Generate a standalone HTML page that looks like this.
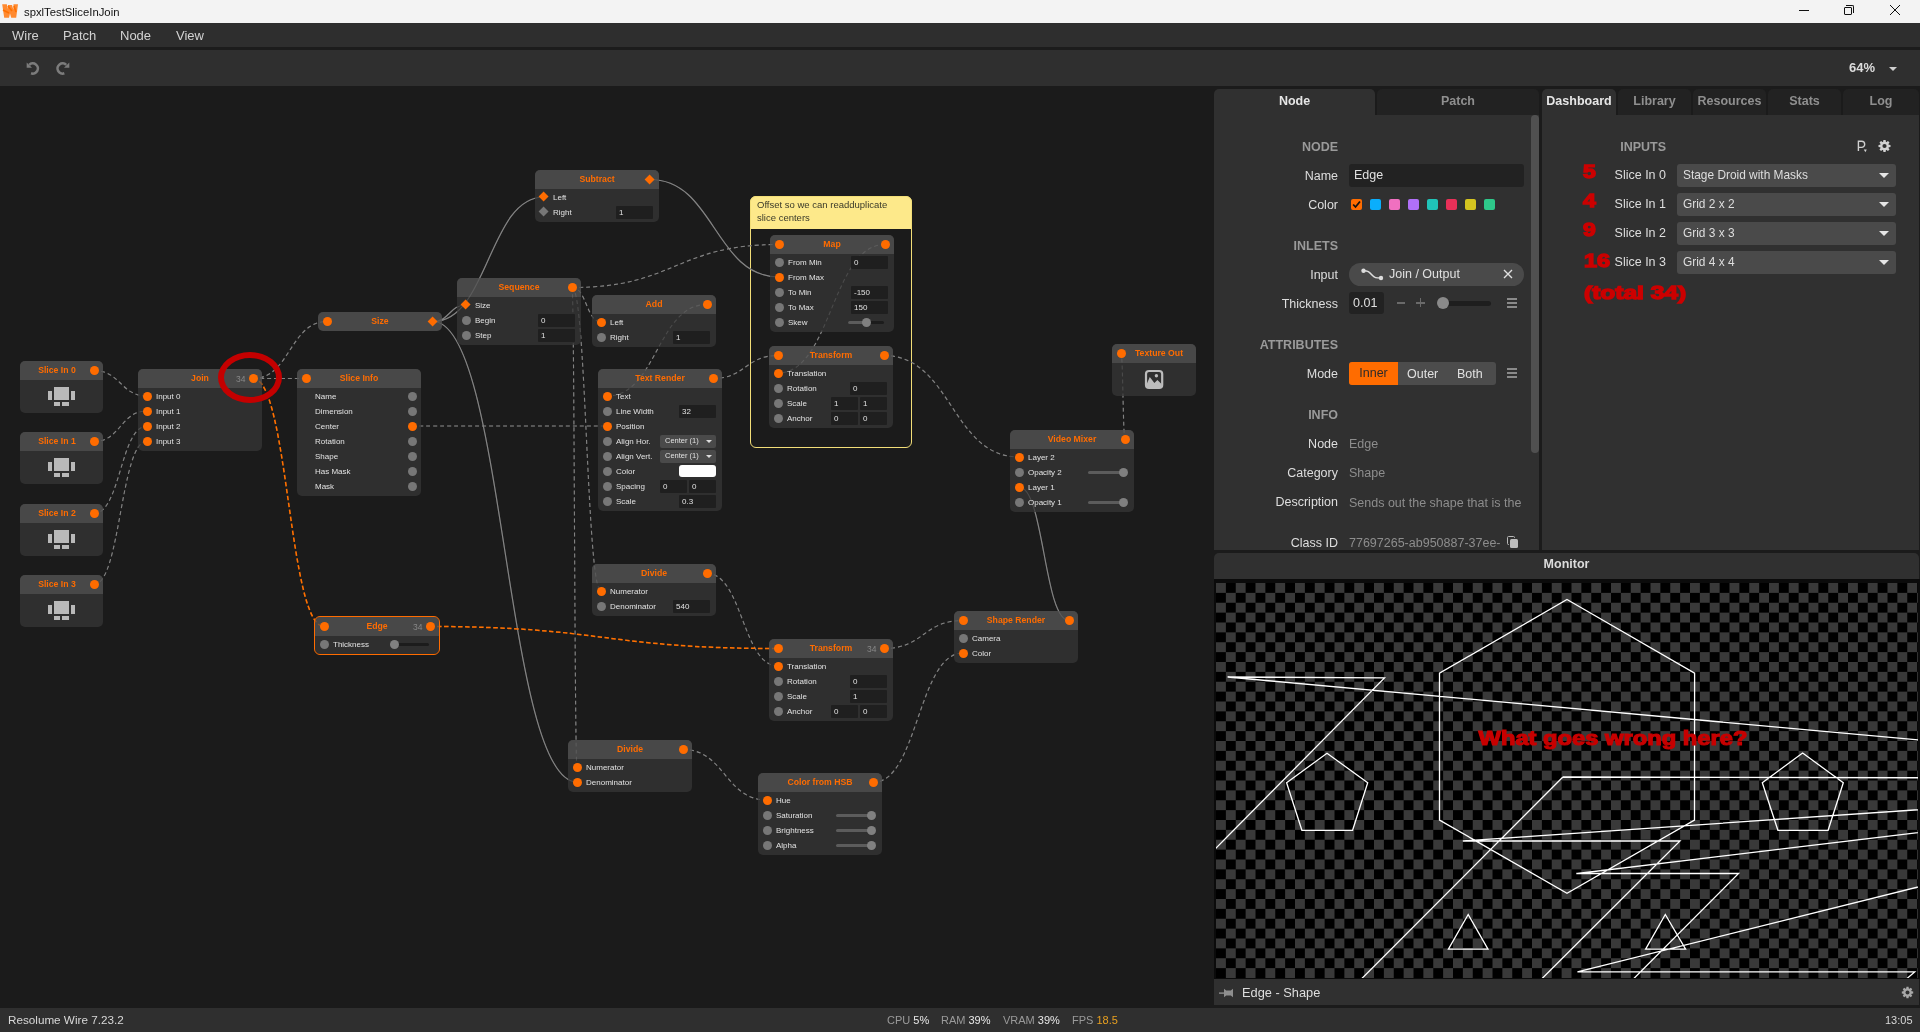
<!DOCTYPE html>
<html><head><meta charset="utf-8">
<style>
*{margin:0;padding:0;box-sizing:border-box}
html,body{width:1920px;height:1032px;overflow:hidden;background:#1b1b1b;font-family:"Liberation Sans",sans-serif;-webkit-font-smoothing:antialiased}
.a{position:absolute}
#title{left:0;top:0;width:1920px;height:23px;background:#f3f3f3}
#menu{left:0;top:23px;width:1920px;height:24px;background:#2e2e2e}
#sep{left:0;top:47px;width:1920px;height:3px;background:#1c1c1c}
#tool{left:0;top:50px;width:1920px;height:36px;background:#2f2f2f}
#canvas{left:0;top:86px;width:1214px;height:922px;background:#1b1b1b;overflow:hidden}
.mi{position:absolute;top:28px;font-size:13px;color:#d2d2d2}
.nd{position:absolute;background:#2f2f2f;border-radius:5px;overflow:hidden}
.nd .hd{height:19px;background:#484848}
.nd.ho{background:#484848}
.selb{position:absolute;border:1.5px solid #ff6c00;border-radius:6px;box-sizing:content-box}
.tt{position:absolute;width:120px;text-align:center;font-size:8.7px;font-weight:bold;color:#ff6c00;line-height:13px;white-space:nowrap}
.cnt{position:absolute;font-size:8.5px;color:#888;line-height:10px}
.pt{position:absolute;width:9px;height:9px;border-radius:50%}
.dm{position:absolute;width:7.2px;height:7.2px;transform:rotate(45deg)}
.lb{position:absolute;font-size:8px;color:#e2e2e2;line-height:12px;white-space:nowrap}
.fd{position:absolute;height:12.5px;background:#1f1f1f;border-radius:1px;font-size:8px;color:#e0e0e0;line-height:13.5px;padding-left:3px}
.dd{position:absolute;height:12.5px;background:#4a4a4a;border-radius:2px;font-size:7.5px;color:#e0e0e0;line-height:12.5px;padding-left:5px;white-space:nowrap}
i.ddar{position:absolute;width:0;height:0;border-left:3px solid transparent;border-right:3px solid transparent;border-top:3px solid #ddd}
.sw{position:absolute;height:12px;background:#fff;border-radius:3px}
i.trk{position:absolute;height:3px;border-radius:2px}
i.knob{position:absolute;width:9px;height:9px;border-radius:50%;background:#808080}
i.ic{position:absolute;background:#b9b9b9}
svg.wires{position:absolute;left:0;top:86px}
svg.wires.up{opacity:0.33}
.wd{fill:none;stroke:#828282;stroke-width:1.1;stroke-dasharray:4 3}
.ws{fill:none;stroke:#848484;stroke-width:1.15}
.wo{fill:none;stroke:#ff7000;stroke-width:1.5;stroke-dasharray:4.5 2.5}
#comment{left:750px;top:196px;width:162px;height:252px;border:1.6px solid #f2de78;border-radius:6px}
#commenthd{left:750px;top:196px;width:162px;height:33px;background:#fde98a;border-radius:6px 6px 0 0}
.ctext{position:absolute;left:757px;font-size:9.5px;color:#3a3a2a;line-height:12px;white-space:nowrap}
#redell{left:218px;top:352px;width:64px;height:51px;border:6px solid #c40000;border-radius:50%}
/* right panels */
.tab{position:absolute;top:89px;height:26px;background:#222;border-radius:5px 5px 0 0;text-align:center;font-size:12.5px;font-weight:bold;color:#8f8f8f;line-height:24px}
.tab.on{background:#303030;color:#e6e6e6}
.pbody{position:absolute;background:#303030}
.sh{position:absolute;font-size:12.5px;font-weight:bold;color:#9a9a9a;text-align:right;width:200px;line-height:16px}
.pl{position:absolute;font-size:12.5px;color:#dedede;text-align:right;width:200px;line-height:16px;white-space:nowrap}
.pv{position:absolute;font-size:12.5px;color:#8d8d8d;line-height:16px;white-space:nowrap}
.sq{position:absolute;top:199px;width:11px;height:11px;border-radius:2px}
.ddr{position:absolute;left:1677px;width:219px;height:23px;background:#4a4a4a;border-radius:3px;font-size:11.9px;color:#dedede;line-height:22px;padding-left:6px}
.ddr i{position:absolute;left:202px;top:9px;border-left:5px solid transparent;border-right:5px solid transparent;border-top:5px solid #e6e6e6}
.rn{position:absolute;font-size:19px;font-weight:bold;color:#cc0000;-webkit-text-stroke:1.4px #cc0000;line-height:20px;white-space:nowrap;transform-origin:0 0;transform:scaleX(1.21)}
svg.mon{position:absolute;left:1216px;top:582.5px}
.wgw{font-size:19.5px;font-weight:bold;fill:#c80000;stroke:#c80000;stroke-width:1.1px;font-family:"Liberation Sans",sans-serif}
.st{position:absolute;top:1013px;font-size:11px;line-height:14px;color:#9a9a9a;white-space:nowrap}
.st b{font-weight:normal;color:#e8e8e8}
#wrap{position:absolute;left:0;top:0;width:1920px;height:1032px;will-change:transform}
</style></head><body><div id="wrap">
<div id="title" class="a">
  <svg class="a" style="left:0;top:0" width="20" height="20" viewBox="0 0 20 20"><path d="M2.2 4.2 L6.8 4.2 L8 9 L8 5 L12 5 L13.3 9.5 L13.5 4.2 L18 4.2 L16.2 17.8 L11.2 17.8 L10 13.5 L9 17.8 L4.2 17.8Z" fill="#ff8a30"/><path d="M3 10 L9 13 M8 6 L12 11 M14 6 L16 12" stroke="#ff7000" stroke-width="1.6"/></svg>
  <div class="a" style="left:24px;top:4px;font-size:11.3px;color:#111;line-height:16px">spxlTestSliceInJoin</div>
  <div class="a" style="left:1799px;top:10px;width:10px;height:1px;background:#111"></div>
  <div class="a" style="left:1844px;top:7px;width:8px;height:8px;border:1px solid #111;border-radius:1px"></div>
  <div class="a" style="left:1846px;top:5px;width:8px;height:8px;border-top:1px solid #111;border-right:1px solid #111;border-radius:0 2px 0 0"></div>
  <svg class="a" style="left:1889px;top:4px" width="12" height="12" viewBox="0 0 12 12"><path d="M1 1L11 11M11 1L1 11" stroke="#111" stroke-width="1"/></svg>
</div>
<div id="menu" class="a"></div>
<div class="mi" style="left:12px">Wire</div>
<div class="mi" style="left:63px">Patch</div>
<div class="mi" style="left:120px">Node</div>
<div class="mi" style="left:176px">View</div>
<div id="sep" class="a"></div>
<div id="tool" class="a">
  <svg class="a" style="left:20px;top:6px" width="56" height="24" viewBox="20 56 56 24"><path d="M26.7 62.4 L26.7 67.7 L32 67.7Z" fill="#7c7c7c"/><path d="M29.2 64.9 A5.1 5.1 0 1 1 31.06 73.3" fill="none" stroke="#7c7c7c" stroke-width="2.6"/><path d="M69.3 62.4 L69.3 67.7 L64 67.7Z" fill="#7c7c7c"/><path d="M66.2 64.9 A5.1 5.1 0 1 0 64.34 73.3" fill="none" stroke="#7c7c7c" stroke-width="2.6"/></svg>
  <div class="a" style="left:1849px;top:10px;font-size:13px;font-weight:bold;color:#dcdcdc;line-height:16px">64%</div>
  <div class="a" style="left:1889px;top:17px;border-left:4px solid transparent;border-right:4px solid transparent;border-top:4px solid #cfcfcf"></div>
</div>
<div id="canvas" class="a"></div>
<div id="commenthd" class="a"></div>
<div id="comment" class="a"></div>
<div class="ctext" style="top:199px">Offset so we can readduplicate</div>
<div class="ctext" style="top:212px">slice centers</div>
<svg class="wires" width="1214" height="922" viewBox="0 86 1214 922"><path class="wd" d="M94 370.5C120.5 370.5 120.5 396 147 396M94 441.5C120.5 441.5 120.5 411 147 411M94 513.5C120.5 513.5 120.5 426 147 426M94 584.5C120.5 584.5 120.5 441 147 441M253 378.5C279.5 378.5 279.5 378.5 306 378.5M253 378.5C290.0 378.5 290.0 321.5 327 321.5M572 287.5C675.5 287.5 675.5 244.5 779 244.5M572 287.5C586.5 287.5 586.5 322 601 322M572 287.5C586.5 287.5 586.5 591 601 591M572 287.5C574.5 287.5 574.5 767 577 767M412 426C509.5 426 509.5 426 607 426M707 304.5C657.0 304.5 657.0 396 607 396M713 378.5C745.5 378.5 745.5 355.5 778 355.5M885 244.5C831.5 244.5 831.5 373 778 373M884 355.5C951.5 355.5 951.5 457 1019 457M1125 439.5C1123.0 439.5 1123.0 353.5 1121 353.5M707 573.5C742.5 573.5 742.5 666 778 666M884 648.5C923.5 648.5 923.5 620.5 963 620.5M683 749.5C725.0 749.5 725.0 800 767 800M873 782.5C918.0 782.5 918.0 653 963 653"/><path class="ws" d="M433 321.5C449.5 321.5 449.5 305 466 305M433 321.5C488.5 321.5 488.5 197 544 197M433 321.5C505.0 321.5 505.0 782 577 782M650 179.5C714.5 179.5 714.5 277 779 277M1069 620.5C1044.0 620.5 1044.0 487 1019 487"/><path class="wo" d="M253 378.5C288.5 378.5 288.5 626.5 324 626.5M430 626.5C604.0 626.5 604.0 648.5 778 648.5"/></svg>
<div class="nd" style="left:20px;top:361px;width:83px;height:52px"><div class="hd"></div></div><div class="nd" style="left:20px;top:432px;width:83px;height:52px"><div class="hd"></div></div><div class="nd" style="left:20px;top:504px;width:83px;height:52px"><div class="hd"></div></div><div class="nd" style="left:20px;top:575px;width:83px;height:52px"><div class="hd"></div></div><div class="nd" style="left:138px;top:369px;width:124px;height:82px"><div class="hd"></div></div><div class="nd ho" style="left:318px;top:312px;width:124px;height:19px"><div class="hd"></div></div><div class="nd" style="left:297px;top:369px;width:124px;height:127px"><div class="hd"></div></div><div class="nd" style="left:535px;top:170px;width:124px;height:52px"><div class="hd"></div></div><div class="nd" style="left:457px;top:278px;width:124px;height:67px"><div class="hd"></div></div><div class="nd" style="left:592px;top:295px;width:124px;height:52px"><div class="hd"></div></div><div class="nd" style="left:598px;top:369px;width:124px;height:142px"><div class="hd"></div></div><div class="nd" style="left:770px;top:235px;width:124px;height:97px"><div class="hd"></div></div><div class="nd" style="left:769px;top:346px;width:124px;height:82px"><div class="hd"></div></div><div class="nd" style="left:1112px;top:344px;width:84px;height:52px"><div class="hd"></div></div><div class="nd" style="left:1010px;top:430px;width:124px;height:82px"><div class="hd"></div></div><div class="nd" style="left:592px;top:564px;width:124px;height:52px"><div class="hd"></div></div><div class="nd" style="left:315px;top:617px;width:124px;height:37px"><div class="hd"></div></div><div class="selb" style="left:313.5px;top:615.5px;width:124px;height:37px"></div><div class="nd" style="left:769px;top:639px;width:124px;height:82px"><div class="hd"></div></div><div class="nd" style="left:954px;top:611px;width:124px;height:52px"><div class="hd"></div></div><div class="nd" style="left:568px;top:740px;width:124px;height:52px"><div class="hd"></div></div><div class="nd" style="left:758px;top:773px;width:124px;height:82px"><div class="hd"></div></div>
<svg class="wires up" width="1214" height="922" viewBox="0 86 1214 922"><path class="wd" d="M94 370.5C120.5 370.5 120.5 396 147 396M94 441.5C120.5 441.5 120.5 411 147 411M94 513.5C120.5 513.5 120.5 426 147 426M94 584.5C120.5 584.5 120.5 441 147 441M253 378.5C279.5 378.5 279.5 378.5 306 378.5M253 378.5C290.0 378.5 290.0 321.5 327 321.5M572 287.5C675.5 287.5 675.5 244.5 779 244.5M572 287.5C586.5 287.5 586.5 322 601 322M572 287.5C586.5 287.5 586.5 591 601 591M572 287.5C574.5 287.5 574.5 767 577 767M412 426C509.5 426 509.5 426 607 426M707 304.5C657.0 304.5 657.0 396 607 396M713 378.5C745.5 378.5 745.5 355.5 778 355.5M885 244.5C831.5 244.5 831.5 373 778 373M884 355.5C951.5 355.5 951.5 457 1019 457M1125 439.5C1123.0 439.5 1123.0 353.5 1121 353.5M707 573.5C742.5 573.5 742.5 666 778 666M884 648.5C923.5 648.5 923.5 620.5 963 620.5M683 749.5C725.0 749.5 725.0 800 767 800M873 782.5C918.0 782.5 918.0 653 963 653"/><path class="ws" d="M433 321.5C449.5 321.5 449.5 305 466 305M433 321.5C488.5 321.5 488.5 197 544 197M433 321.5C505.0 321.5 505.0 782 577 782M650 179.5C714.5 179.5 714.5 277 779 277M1069 620.5C1044.0 620.5 1044.0 487 1019 487"/><path class="wo" d="M253 378.5C288.5 378.5 288.5 626.5 324 626.5M430 626.5C604.0 626.5 604.0 648.5 778 648.5"/></svg>
<div class="tt" style="left:-3px;top:364px">Slice In 0</div><i class="pt" style="left:89.5px;top:366.0px;background:#ff6c00"></i><i class="ic" style="left:54px;top:387px;width:15px;height:13px"></i><i class="ic" style="left:48px;top:391px;width:4px;height:9px"></i><i class="ic" style="left:71px;top:391px;width:4px;height:9px"></i><i class="ic" style="left:54px;top:402px;width:6px;height:4px"></i><i class="ic" style="left:62px;top:402px;width:7px;height:4px"></i><div class="tt" style="left:-3px;top:435px">Slice In 1</div><i class="pt" style="left:89.5px;top:437.0px;background:#ff6c00"></i><i class="ic" style="left:54px;top:458px;width:15px;height:13px"></i><i class="ic" style="left:48px;top:462px;width:4px;height:9px"></i><i class="ic" style="left:71px;top:462px;width:4px;height:9px"></i><i class="ic" style="left:54px;top:473px;width:6px;height:4px"></i><i class="ic" style="left:62px;top:473px;width:7px;height:4px"></i><div class="tt" style="left:-3px;top:507px">Slice In 2</div><i class="pt" style="left:89.5px;top:509.0px;background:#ff6c00"></i><i class="ic" style="left:54px;top:530px;width:15px;height:13px"></i><i class="ic" style="left:48px;top:534px;width:4px;height:9px"></i><i class="ic" style="left:71px;top:534px;width:4px;height:9px"></i><i class="ic" style="left:54px;top:545px;width:6px;height:4px"></i><i class="ic" style="left:62px;top:545px;width:7px;height:4px"></i><div class="tt" style="left:-3px;top:578px">Slice In 3</div><i class="pt" style="left:89.5px;top:580.0px;background:#ff6c00"></i><i class="ic" style="left:54px;top:601px;width:15px;height:13px"></i><i class="ic" style="left:48px;top:605px;width:4px;height:9px"></i><i class="ic" style="left:71px;top:605px;width:4px;height:9px"></i><i class="ic" style="left:54px;top:616px;width:6px;height:4px"></i><i class="ic" style="left:62px;top:616px;width:7px;height:4px"></i><div class="tt" style="left:140.0px;top:372px">Join</div><div class="cnt" style="left:236px;top:373.5px">34</div><i class="pt" style="left:248.5px;top:374.0px;background:#ff6c00"></i><i class="pt" style="left:142.5px;top:391.5px;background:#ff6c00"></i><div class="lb" style="left:156px;top:390.5px">Input 0</div><i class="pt" style="left:142.5px;top:406.5px;background:#ff6c00"></i><div class="lb" style="left:156px;top:405.5px">Input 1</div><i class="pt" style="left:142.5px;top:421.5px;background:#ff6c00"></i><div class="lb" style="left:156px;top:420.5px">Input 2</div><i class="pt" style="left:142.5px;top:436.5px;background:#ff6c00"></i><div class="lb" style="left:156px;top:435.5px">Input 3</div><div class="tt" style="left:320.0px;top:315px">Size</div><i class="pt" style="left:322.5px;top:317.0px;background:#ff6c00"></i><i class="dm" style="left:429.4px;top:317.9px;background:#ff6c00"></i><div class="tt" style="left:299.0px;top:372px">Slice Info</div><i class="pt" style="left:301.5px;top:374.0px;background:#ff6c00"></i><i class="pt" style="left:407.5px;top:391.5px;background:#777777"></i><div class="lb" style="left:315px;top:390.5px">Name</div><i class="pt" style="left:407.5px;top:406.5px;background:#777777"></i><div class="lb" style="left:315px;top:405.5px">Dimension</div><i class="pt" style="left:407.5px;top:421.5px;background:#ff6c00"></i><div class="lb" style="left:315px;top:420.5px">Center</div><i class="pt" style="left:407.5px;top:436.5px;background:#777777"></i><div class="lb" style="left:315px;top:435.5px">Rotation</div><i class="pt" style="left:407.5px;top:451.5px;background:#777777"></i><div class="lb" style="left:315px;top:450.5px">Shape</div><i class="pt" style="left:407.5px;top:466.5px;background:#777777"></i><div class="lb" style="left:315px;top:465.5px">Has Mask</div><i class="pt" style="left:407.5px;top:481.5px;background:#777777"></i><div class="lb" style="left:315px;top:480.5px">Mask</div><div class="tt" style="left:537.0px;top:173px">Subtract</div><i class="dm" style="left:646.4px;top:175.9px;background:#ff6c00"></i><i class="dm" style="left:540.4px;top:193.4px;background:#ff6c00"></i><div class="lb" style="left:553px;top:191.5px">Left</div><i class="dm" style="left:540.4px;top:208.4px;background:#777777"></i><div class="lb" style="left:553px;top:206.5px">Right</div><div class="fd" style="left:616px;top:206px;width:37px">1</div><div class="tt" style="left:459.0px;top:281px">Sequence</div><i class="pt" style="left:567.5px;top:283.0px;background:#ff6c00"></i><i class="dm" style="left:462.4px;top:301.4px;background:#ff6c00"></i><div class="lb" style="left:475px;top:299.5px">Size</div><i class="pt" style="left:461.5px;top:315.5px;background:#777777"></i><div class="lb" style="left:475px;top:314.5px">Begin</div><div class="fd" style="left:538px;top:314px;width:37px">0</div><i class="pt" style="left:461.5px;top:330.5px;background:#777777"></i><div class="lb" style="left:475px;top:329.5px">Step</div><div class="fd" style="left:538px;top:329px;width:37px">1</div><div class="tt" style="left:594.0px;top:298px">Add</div><i class="pt" style="left:702.5px;top:300.0px;background:#ff6c00"></i><i class="pt" style="left:596.5px;top:317.5px;background:#ff6c00"></i><div class="lb" style="left:610px;top:316.5px">Left</div><i class="pt" style="left:596.5px;top:332.5px;background:#777777"></i><div class="lb" style="left:610px;top:331.5px">Right</div><div class="fd" style="left:673px;top:331px;width:37px">1</div><div class="tt" style="left:600.0px;top:372px">Text Render</div><i class="pt" style="left:708.5px;top:374.0px;background:#ff6c00"></i><i class="pt" style="left:602.5px;top:391.5px;background:#ff6c00"></i><div class="lb" style="left:616px;top:390.5px">Text</div><i class="pt" style="left:602.5px;top:406.5px;background:#777777"></i><div class="lb" style="left:616px;top:405.5px">Line Width</div><div class="fd" style="left:679px;top:405px;width:37px">32</div><i class="pt" style="left:602.5px;top:421.5px;background:#ff6c00"></i><div class="lb" style="left:616px;top:420.5px">Position</div><i class="pt" style="left:602.5px;top:436.5px;background:#777777"></i><div class="lb" style="left:616px;top:435.5px">Align Hor.</div><div class="dd" style="left:660px;top:435px;width:56px">Center (1)</div><i class="ddar" style="left:706px;top:440px"></i><i class="pt" style="left:602.5px;top:451.5px;background:#777777"></i><div class="lb" style="left:616px;top:450.5px">Align Vert.</div><div class="dd" style="left:660px;top:450px;width:56px">Center (1)</div><i class="ddar" style="left:706px;top:455px"></i><i class="pt" style="left:602.5px;top:466.5px;background:#777777"></i><div class="lb" style="left:616px;top:465.5px">Color</div><div class="sw" style="left:679px;top:465px;width:37px"></div><i class="pt" style="left:602.5px;top:481.5px;background:#777777"></i><div class="lb" style="left:616px;top:480.5px">Spacing</div><div class="fd" style="left:660px;top:480px;width:27px">0</div><div class="fd" style="left:689px;top:480px;width:27px">0</div><i class="pt" style="left:602.5px;top:496.5px;background:#777777"></i><div class="lb" style="left:616px;top:495.5px">Scale</div><div class="fd" style="left:679px;top:495px;width:37px">0.3</div><div class="tt" style="left:772.0px;top:238px">Map</div><i class="pt" style="left:774.5px;top:240.0px;background:#ff6c00"></i><i class="pt" style="left:880.5px;top:240.0px;background:#ff6c00"></i><i class="pt" style="left:774.5px;top:257.5px;background:#777777"></i><div class="lb" style="left:788px;top:256.5px">From Min</div><div class="fd" style="left:851px;top:256px;width:37px">0</div><i class="pt" style="left:774.5px;top:272.5px;background:#ff6c00"></i><div class="lb" style="left:788px;top:271.5px">From Max</div><i class="pt" style="left:774.5px;top:287.5px;background:#777777"></i><div class="lb" style="left:788px;top:286.5px">To Min</div><div class="fd" style="left:851px;top:286px;width:37px">-150</div><i class="pt" style="left:774.5px;top:302.5px;background:#777777"></i><div class="lb" style="left:788px;top:301.5px">To Max</div><div class="fd" style="left:851px;top:301px;width:37px">150</div><i class="pt" style="left:774.5px;top:317.5px;background:#777777"></i><div class="lb" style="left:788px;top:316.5px">Skew</div><i class="trk" style="left:848px;top:320.5px;width:36px;background:#1c1c1c"></i><i class="trk" style="left:848px;top:320.5px;width:18px;background:#5c5c5c"></i><i class="knob" style="left:861.5px;top:317.5px"></i><div class="tt" style="left:771.0px;top:349px">Transform</div><i class="pt" style="left:773.5px;top:351.0px;background:#ff6c00"></i><i class="pt" style="left:879.5px;top:351.0px;background:#ff6c00"></i><i class="pt" style="left:773.5px;top:368.5px;background:#ff6c00"></i><div class="lb" style="left:787px;top:367.5px">Translation</div><i class="pt" style="left:773.5px;top:383.5px;background:#777777"></i><div class="lb" style="left:787px;top:382.5px">Rotation</div><div class="fd" style="left:850px;top:382px;width:37px">0</div><i class="pt" style="left:773.5px;top:398.5px;background:#777777"></i><div class="lb" style="left:787px;top:397.5px">Scale</div><div class="fd" style="left:831px;top:397px;width:27px">1</div><div class="fd" style="left:860px;top:397px;width:27px">1</div><i class="pt" style="left:773.5px;top:413.5px;background:#777777"></i><div class="lb" style="left:787px;top:412.5px">Anchor</div><div class="fd" style="left:831px;top:412px;width:27px">0</div><div class="fd" style="left:860px;top:412px;width:27px">0</div><div class="tt" style="left:1099px;top:347px">Texture Out</div><i class="pt" style="left:1116.5px;top:349.0px;background:#ff6c00"></i><div class="tt" style="left:1012.0px;top:433px">Video Mixer</div><i class="pt" style="left:1120.5px;top:435.0px;background:#ff6c00"></i><i class="pt" style="left:1014.5px;top:452.5px;background:#ff6c00"></i><div class="lb" style="left:1028px;top:451.5px">Layer 2</div><i class="pt" style="left:1014.5px;top:467.5px;background:#777777"></i><div class="lb" style="left:1028px;top:466.5px">Opacity 2</div><i class="trk" style="left:1088px;top:470.5px;width:38px;background:#5c5c5c"></i><i class="knob" style="left:1118.5px;top:467.5px"></i><i class="pt" style="left:1014.5px;top:482.5px;background:#ff6c00"></i><div class="lb" style="left:1028px;top:481.5px">Layer 1</div><i class="pt" style="left:1014.5px;top:497.5px;background:#777777"></i><div class="lb" style="left:1028px;top:496.5px">Opacity 1</div><i class="trk" style="left:1088px;top:500.5px;width:38px;background:#5c5c5c"></i><i class="knob" style="left:1118.5px;top:497.5px"></i><div class="tt" style="left:594.0px;top:567px">Divide</div><i class="pt" style="left:702.5px;top:569.0px;background:#ff6c00"></i><i class="pt" style="left:596.5px;top:586.5px;background:#ff6c00"></i><div class="lb" style="left:610px;top:585.5px">Numerator</div><i class="pt" style="left:596.5px;top:601.5px;background:#777777"></i><div class="lb" style="left:610px;top:600.5px">Denominator</div><div class="fd" style="left:673px;top:600px;width:37px">540</div><div class="tt" style="left:317.0px;top:620px">Edge</div><div class="cnt" style="left:413px;top:621.5px">34</div><i class="pt" style="left:319.5px;top:622.0px;background:#ff6c00"></i><i class="pt" style="left:425.5px;top:622.0px;background:#ff6c00"></i><i class="pt" style="left:319.5px;top:639.5px;background:#777777"></i><div class="lb" style="left:333px;top:638.5px">Thickness</div><i class="trk" style="left:394px;top:642.5px;width:35px;background:#1c1c1c"></i><i class="trk" style="left:394px;top:642.5px;width:0px;background:#5c5c5c"></i><i class="knob" style="left:389.5px;top:639.5px"></i><div class="tt" style="left:771.0px;top:642px">Transform</div><div class="cnt" style="left:867px;top:643.5px">34</div><i class="pt" style="left:773.5px;top:644.0px;background:#ff6c00"></i><i class="pt" style="left:879.5px;top:644.0px;background:#ff6c00"></i><i class="pt" style="left:773.5px;top:661.5px;background:#ff6c00"></i><div class="lb" style="left:787px;top:660.5px">Translation</div><i class="pt" style="left:773.5px;top:676.5px;background:#777777"></i><div class="lb" style="left:787px;top:675.5px">Rotation</div><div class="fd" style="left:850px;top:675px;width:37px">0</div><i class="pt" style="left:773.5px;top:691.5px;background:#777777"></i><div class="lb" style="left:787px;top:690.5px">Scale</div><div class="fd" style="left:850px;top:690px;width:37px">1</div><i class="pt" style="left:773.5px;top:706.5px;background:#777777"></i><div class="lb" style="left:787px;top:705.5px">Anchor</div><div class="fd" style="left:831px;top:705px;width:27px">0</div><div class="fd" style="left:860px;top:705px;width:27px">0</div><div class="tt" style="left:956.0px;top:614px">Shape Render</div><i class="pt" style="left:958.5px;top:616.0px;background:#ff6c00"></i><i class="pt" style="left:1064.5px;top:616.0px;background:#ff6c00"></i><i class="pt" style="left:958.5px;top:633.5px;background:#777777"></i><div class="lb" style="left:972px;top:632.5px">Camera</div><i class="pt" style="left:958.5px;top:648.5px;background:#ff6c00"></i><div class="lb" style="left:972px;top:647.5px">Color</div><div class="tt" style="left:570.0px;top:743px">Divide</div><i class="pt" style="left:678.5px;top:745.0px;background:#ff6c00"></i><i class="pt" style="left:572.5px;top:762.5px;background:#ff6c00"></i><div class="lb" style="left:586px;top:761.5px">Numerator</div><i class="pt" style="left:572.5px;top:777.5px;background:#ff6c00"></i><div class="lb" style="left:586px;top:776.5px">Denominator</div><div class="tt" style="left:760.0px;top:776px">Color from HSB</div><i class="pt" style="left:868.5px;top:778.0px;background:#ff6c00"></i><i class="pt" style="left:762.5px;top:795.5px;background:#ff6c00"></i><div class="lb" style="left:776px;top:794.5px">Hue</div><i class="pt" style="left:762.5px;top:810.5px;background:#777777"></i><div class="lb" style="left:776px;top:809.5px">Saturation</div><i class="trk" style="left:836px;top:813.5px;width:38px;background:#5c5c5c"></i><i class="knob" style="left:866.5px;top:810.5px"></i><i class="pt" style="left:762.5px;top:825.5px;background:#777777"></i><div class="lb" style="left:776px;top:824.5px">Brightness</div><i class="trk" style="left:836px;top:828.5px;width:38px;background:#5c5c5c"></i><i class="knob" style="left:866.5px;top:825.5px"></i><i class="pt" style="left:762.5px;top:840.5px;background:#777777"></i><div class="lb" style="left:776px;top:839.5px">Alpha</div><i class="trk" style="left:836px;top:843.5px;width:38px;background:#5c5c5c"></i><i class="knob" style="left:866.5px;top:840.5px"></i>
<svg class="a" style="left:1144px;top:369px" width="21" height="21" viewBox="1144 369 21 21"><rect x="1146" y="371" width="16.2" height="17" rx="3" fill="none" stroke="#bcbcbc" stroke-width="2.2"/><path d="M1146.5 384.5 L1149.8 377 L1154.4 383.1 L1157.4 380 L1161.5 384 L1161.5 387.5 L1146.5 387.5Z" fill="#bcbcbc"/><circle cx="1156.4" cy="375.8" r="1.7" fill="#bcbcbc"/></svg>
<div id="redell" class="a"></div>

<!-- Node panel -->
<div class="tab on" style="left:1214px;width:161px">Node</div>
<div class="tab" style="left:1377px;width:162px">Patch</div>
<div class="pbody" style="left:1214px;top:115px;width:325px;height:435px"></div>
<div class="a" style="left:1531px;top:115px;width:8px;height:338px;background:#505050;border-radius:4px"></div>
<div class="sh" style="left:1138px;top:139px">NODE</div>
<div class="pl" style="left:1138px;top:168px">Name</div>
<div class="a" style="left:1349px;top:164px;width:175px;height:23px;background:#222;border-radius:3px;font-size:12.5px;color:#e0e0e0;line-height:22px;padding-left:5px">Edge</div>
<div class="pl" style="left:1138px;top:197px">Color</div>
<div class="sq" style="left:1351px;background:#ff6c00"></div>
<svg class="a" style="left:1351px;top:199px" width="11" height="11" viewBox="0 0 11 11"><path d="M2.2 5.5 L4.5 8 L9 2.5" fill="none" stroke="#111" stroke-width="1.8"/></svg>
<div class="sq" style="left:1370px;background:#0aaefc"></div>
<div class="sq" style="left:1389px;background:#f070c0"></div>
<div class="sq" style="left:1408px;background:#b070f8"></div>
<div class="sq" style="left:1427px;background:#20c4b8"></div>
<div class="sq" style="left:1446px;background:#e83058"></div>
<div class="sq" style="left:1465px;background:#d4c420"></div>
<div class="sq" style="left:1484px;background:#2ec88a"></div>
<div class="sh" style="left:1138px;top:238px">INLETS</div>
<div class="pl" style="left:1138px;top:267px">Input</div>
<div class="a" style="left:1349px;top:263px;width:175px;height:23px;background:#4a4a4a;border-radius:12px"></div>
<svg class="a" style="left:1359px;top:266px" width="26" height="17" viewBox="0 0 26 17"><path d="M4.5 4.7 C9 4.7 10 5.5 13 9 C15.5 12 17 12 22 12" fill="none" stroke="#ddd" stroke-width="1.5"/><circle cx="4.5" cy="4.7" r="2.2" fill="#ddd"/><circle cx="22" cy="12" r="2.2" fill="#ddd"/></svg>
<div class="pv" style="left:1389px;top:266px;color:#e0e0e0">Join / Output</div>
<svg class="a" style="left:1503px;top:269px" width="10" height="10" viewBox="0 0 10 10"><path d="M1 1L9 9M9 1L1 9" stroke="#e0e0e0" stroke-width="1.4"/></svg>
<div class="pl" style="left:1138px;top:296px">Thickness</div>
<div class="a" style="left:1349px;top:292px;width:35px;height:22px;background:#222;border-radius:3px;font-size:12.5px;color:#e0e0e0;line-height:22px;padding-left:4px">0.01</div>
<div class="a" style="left:1397px;top:302px;width:8px;height:1.5px;background:#6a6a6a"></div>
<div class="a" style="left:1416px;top:302px;width:9px;height:1.5px;background:#6a6a6a"></div>
<div class="a" style="left:1419.8px;top:298px;width:1.5px;height:9px;background:#6a6a6a"></div>
<div class="a" style="left:1440px;top:301px;width:51px;height:5px;background:#1e1e1e;border-radius:3px"></div>
<div class="a" style="left:1437px;top:297px;width:12px;height:12px;background:#8a8a8a;border-radius:50%"></div>
<div class="a" style="left:1507px;top:298px;width:10px;height:2px;background:#8a8a8a;box-shadow:0 4px 0 #8a8a8a,0 8px 0 #8a8a8a"></div>
<div class="sh" style="left:1138px;top:337px">ATTRIBUTES</div>
<div class="pl" style="left:1138px;top:366px">Mode</div>
<div class="a" style="left:1349px;top:362px;width:147px;height:23px;background:#4c4c4c;border-radius:3px"></div>
<div class="a" style="left:1349px;top:362px;width:49px;height:23px;background:#ff6c00;border-radius:3px 0 0 3px;font-size:12.5px;color:#2a2a2a;line-height:22px;text-align:center">Inner</div>
<div class="pv" style="left:1407px;top:366px;color:#e0e0e0">Outer</div>
<div class="pv" style="left:1457px;top:366px;color:#e0e0e0">Both</div>
<div class="a" style="left:1507px;top:368px;width:10px;height:2px;background:#8a8a8a;box-shadow:0 4px 0 #8a8a8a,0 8px 0 #8a8a8a"></div>
<div class="sh" style="left:1138px;top:407px">INFO</div>
<div class="pl" style="left:1138px;top:436px">Node</div>
<div class="pv" style="left:1349px;top:436px">Edge</div>
<div class="pl" style="left:1138px;top:465px">Category</div>
<div class="pv" style="left:1349px;top:465px">Shape</div>
<div class="pl" style="left:1138px;top:494px">Description</div>
<div class="pv" style="left:1349px;top:495px">Sends out the shape that is the</div>
<div class="pl" style="left:1138px;top:535px">Class ID</div>
<div class="pv" style="left:1349px;top:535px">77697265-ab950887-37ee-</div>
<div class="a" style="left:1507px;top:535.5px;width:8px;height:9px;border:1.3px solid #b8b8b8;border-radius:1.5px"></div><div class="a" style="left:1509.5px;top:538.5px;width:8.5px;height:9px;background:#bdbdbd;border-radius:1.5px;box-shadow:-1px -1px 0 #303030"></div>

<!-- Dashboard panel -->
<div class="tab on" style="left:1542px;width:74px">Dashboard</div>
<div class="tab" style="left:1618px;width:73px">Library</div>
<div class="tab" style="left:1693px;width:73px">Resources</div>
<div class="tab" style="left:1768px;width:73px">Stats</div>
<div class="tab" style="left:1843px;width:76px">Log</div>
<div class="pbody" style="left:1542px;top:115px;width:377px;height:435px"></div>
<div class="sh" style="left:1466px;top:139px">INPUTS</div>
<svg class="a" style="left:1850px;top:134px" width="20" height="22" viewBox="1850 134 20 22"><path d="M1858.4 151 V141.2 H1861.6 A3.1 3.1 0 0 1 1861.6 147.4 H1858.4" fill="none" stroke="#cfcfcf" stroke-width="1.4"/><path d="M1863.8 149.6 L1866.8 149.6 L1865.4 152.2Z" fill="#cfcfcf"/></svg>
<svg class="a" style="left:1876px;top:138px" width="17" height="17" viewBox="-8.5 -8 17 17"><g transform="translate(0 0) scale(1)"><g fill="#d2d2d2"><circle r="4.3"/><path d="M-1.1 -6 L1.1 -6 L1.6 -3 L-1.6 -3Z" transform="rotate(0)"/><path d="M-1.1 -6 L1.1 -6 L1.6 -3 L-1.6 -3Z" transform="rotate(45)"/><path d="M-1.1 -6 L1.1 -6 L1.6 -3 L-1.6 -3Z" transform="rotate(90)"/><path d="M-1.1 -6 L1.1 -6 L1.6 -3 L-1.6 -3Z" transform="rotate(135)"/><path d="M-1.1 -6 L1.1 -6 L1.6 -3 L-1.6 -3Z" transform="rotate(180)"/><path d="M-1.1 -6 L1.1 -6 L1.6 -3 L-1.6 -3Z" transform="rotate(225)"/><path d="M-1.1 -6 L1.1 -6 L1.6 -3 L-1.6 -3Z" transform="rotate(270)"/><path d="M-1.1 -6 L1.1 -6 L1.6 -3 L-1.6 -3Z" transform="rotate(315)"/></g><circle r="2.1" fill="#303030"/></g></svg>
<div class="pl" style="left:1466px;top:167px">Slice In 0</div>
<div class="pl" style="left:1466px;top:196px">Slice In 1</div>
<div class="pl" style="left:1466px;top:225px">Slice In 2</div>
<div class="pl" style="left:1466px;top:254px">Slice In 3</div>
<div class="ddr" style="top:164px">Stage Droid with Masks<i></i></div>
<div class="ddr" style="top:193px">Grid 2 x 2<i></i></div>
<div class="ddr" style="top:222px">Grid 3 x 3<i></i></div>
<div class="ddr" style="top:251px">Grid 4 x 4<i></i></div>
<div class="rn" style="left:1583px;top:162px">5</div>
<div class="rn" style="left:1583px;top:191px">4</div>
<div class="rn" style="left:1583px;top:220px">9</div>
<div class="rn" style="left:1584px;top:251px;transform:scaleX(1.24)">16</div>
<div class="rn" style="left:1584px;top:283px;transform:scaleX(1.29)">(total 34)</div>

<!-- Monitor -->
<div class="a" style="left:1214px;top:553px;width:705px;height:26px;background:#303030;border-radius:5px 5px 0 0;text-align:center;font-size:12.5px;font-weight:bold;color:#dcdcdc;line-height:23px">Monitor</div>
<div class="a" style="left:1214px;top:579px;width:706px;height:400px;background:#0b0b0b"></div>
<svg class="mon" width="702" height="395" viewBox="1216 582.5 702 395"><defs><pattern id="ck" patternUnits="userSpaceOnUse" x="1216" y="582.5" width="19.75" height="19.75"><rect width="19.75" height="19.75" fill="#000"/><rect width="9.875" height="9.875" fill="#393939"/><rect x="9.875" y="9.875" width="9.875" height="9.875" fill="#393939"/></pattern></defs><rect x="1216" y="582.5" width="702" height="395.5" fill="url(#ck)"/><path d="M1567 599 L1694.6 672.6 L1694.5 819.5 L1567 892.8 L1439.5 819.5 L1439.5 672.6ZM1327 752.8 L1367.7 782.3 L1352.6 829.8 L1301.9 829.8 L1286.6 782.3ZM1802.6 752.5 L1843.3 782.3 L1828.1 829.8 L1777.9 829.8 L1762.3 782.3ZM1468.2 914 L1488 948.6 L1448.4 948.6ZM1665.3 914 L1685.6 948.6 L1645.6 948.6ZM1227.6 676.5L1384.5 677.4L1170 894M1227.6 676.5L1990 746M1562.9 776.5L1990 777.4M1562.9 776.5L1300 1040M1462.8 840.5L1680 840.4L1480 1040M1462.8 840.5L1990 804.3M1576.3 873L1738.6 873L1570 1042M1577.4 873L1990 823.5M1577.4 971.4L1914.7 971.4L1900 984M1577.4 971.4L1990 868.5" fill="none" stroke="#fff" stroke-width="1.3" stroke-linejoin="miter"/><text x="1478.5" y="744.5" class="wgw" textLength="269" lengthAdjust="spacingAndGlyphs">What goes wrong here?</text></svg>
<div class="a" style="left:1214px;top:979px;width:705px;height:26px;background:#303030"></div>
<svg class="a" style="left:1214px;top:980px" width="24" height="24" viewBox="1214 980 24 24"><rect x="1219" y="992.4" width="5.5" height="1.4" fill="#8e8e8e"/><path d="M1224 988.8 L1226.2 990.6 L1230.8 990.6 L1233 988.8 L1233 997.2 L1230.8 995.4 L1226.2 995.4 L1224 997.2Z" fill="#8e8e8e"/></svg>
<div class="a" style="left:1242px;top:985px;font-size:12.8px;color:#dedede;line-height:16px">Edge - Shape</div>
<svg class="a" style="left:1899px;top:984px" width="17" height="17" viewBox="-8.5 -8.5 17 17"><g transform="translate(0 0) scale(0.95)"><g fill="#a8a8a8"><circle r="4.3"/><path d="M-1.1 -6 L1.1 -6 L1.6 -3 L-1.6 -3Z" transform="rotate(0)"/><path d="M-1.1 -6 L1.1 -6 L1.6 -3 L-1.6 -3Z" transform="rotate(45)"/><path d="M-1.1 -6 L1.1 -6 L1.6 -3 L-1.6 -3Z" transform="rotate(90)"/><path d="M-1.1 -6 L1.1 -6 L1.6 -3 L-1.6 -3Z" transform="rotate(135)"/><path d="M-1.1 -6 L1.1 -6 L1.6 -3 L-1.6 -3Z" transform="rotate(180)"/><path d="M-1.1 -6 L1.1 -6 L1.6 -3 L-1.6 -3Z" transform="rotate(225)"/><path d="M-1.1 -6 L1.1 -6 L1.6 -3 L-1.6 -3Z" transform="rotate(270)"/><path d="M-1.1 -6 L1.1 -6 L1.6 -3 L-1.6 -3Z" transform="rotate(315)"/></g><circle r="2.1" fill="#303030"/></g></svg>

<!-- Status bar -->
<div class="a" style="left:0;top:1008px;width:1920px;height:24px;background:#2f2f2f"></div>
<div class="st" style="left:8px;color:#d8d8d8;font-size:11.7px">Resolume Wire 7.23.2</div>
<div class="st" style="left:887px">CPU <b>5%</b></div>
<div class="st" style="left:941px">RAM <b>39%</b></div>
<div class="st" style="left:1003px">VRAM <b>39%</b></div>
<div class="st" style="left:1072px">FPS <b style="color:#e8a020">18.5</b></div>
<div class="st" style="left:1885px;color:#d8d8d8">13:05</div>
</div></body></html>
